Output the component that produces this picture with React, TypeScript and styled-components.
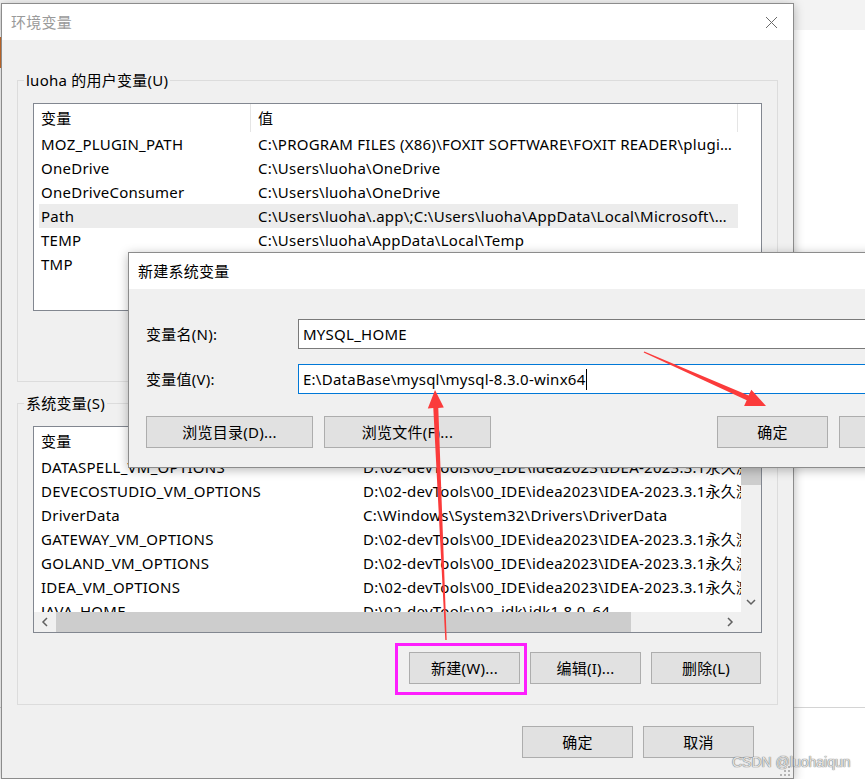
import styled, { createGlobalStyle } from 'styled-components'

const GlobalStyle = createGlobalStyle`
	* {
		box-sizing: border-box;
	}
	html,
	body {
		margin: 0;
		padding: 0;
		overflow: hidden;
		background: #fff;
	}
`

const Desktop = styled.div`
	position: relative;
	width: 865px;
	height: 779px;
	overflow: hidden;
	background:
		linear-gradient(#d0702c, #d0702c) 0 37px / 1px 31px no-repeat,
		linear-gradient(to bottom, #f3f3f3 0 30px, #ffffff 30px 707px, #d4d4d4 707px 708px, #ffffff 708px);
	font-family: 'Noto Sans', 'Noto Sans CJK SC', sans-serif;
	font-size: 15px;
	line-height: 20px;
	letter-spacing: 0.25px;
	color: #000;
`

const Window = styled.div<{ $x: number; $y: number; $w: number; $h: number }>`
	position: absolute;
	left: ${p => p.$x}px;
	top: ${p => p.$y}px;
	width: ${p => p.$w}px;
	height: ${p => p.$h}px;
	display: flex;
	flex-direction: column;
	background: #f0f0f0;
	border: 1px solid #8c8c8c;
	box-shadow: 0 2px 10px rgba(0, 0, 0, 0.28);
`

const TitleBar = styled.div<{ $inactive?: boolean }>`
	flex: none;
	height: 36px;
	display: flex;
	align-items: center;
	justify-content: space-between;
	padding-left: 9px;
	background: #fff;
	color: ${p => (p.$inactive ? '#9a9a9a' : '#000')};
`

const CloseButton = styled.div`
	width: 44px;
	height: 36px;
	display: flex;
	align-items: center;
	justify-content: center;
`

const MainBody = styled.div`
	flex: 1;
	display: flex;
	flex-direction: column;
	padding: 30px 15px 20px 15px;
`

const GroupBox = styled.fieldset<{ $gapTop?: number }>`
	margin: ${p => p.$gapTop || 0}px 0 0 0;
	padding: 13px 15px 20px 15px;
	border: 1px solid #dcdcdc;
	min-width: 0;
	display: flex;
	flex-direction: column;
`

const Legend = styled.legend`
	padding: 0 2px;
	margin-left: -9px;
	line-height: 20px;
`

const ListView = styled.div<{ $h: number }>`
	flex: none;
	height: ${p => p.$h}px;
	border: 1px solid #828790;
	background: #fff;
	overflow: hidden;
`

const HeaderRow = styled.div`
	display: flex;
	height: 28px;
`

const HeaderCell = styled.div<{ $w: number }>`
	flex: none;
	width: ${p => p.$w}px;
	padding-left: 7px;
	display: flex;
	align-items: center;
	border-right: 1px solid #e5e5e5;
`

const Row = styled.div<{ $selected?: boolean }>`
	display: flex;
	align-items: center;
	height: 24px;
	width: fit-content;
	background: ${p => (p.$selected ? 'linear-gradient(to right, transparent 5px, #ececec 5px)' : 'transparent')};
`

const Cell = styled.div<{ $w: number }>`
	flex: none;
	width: ${p => p.$w}px;
	padding: 0 4px 0 7px;
	white-space: nowrap;
	overflow: hidden;
	text-overflow: ellipsis;
`

const ScrollFrame = styled.div`
	height: 100%;
	display: grid;
	grid-template-columns: 1fr 20px;
	grid-template-rows: 1fr 20px;
`

const Viewport = styled.div`
	overflow: hidden;
	min-width: 0;
`

const VScroll = styled.div`
	display: flex;
	flex-direction: column;
	background: #f0f0f0;
`

const HScroll = styled.div`
	display: flex;
	background: #f0f0f0;
`

const ArrowButton = styled.div<{ $long?: boolean }>`
	flex: none;
	width: ${p => (p.$long ? 22 : 20)}px;
	height: 20px;
	display: flex;
	align-items: center;
	justify-content: center;
`

const Track = styled.div<{ $vertical?: boolean }>`
	flex: 1;
	display: flex;
	flex-direction: ${p => (p.$vertical ? 'column' : 'row')};
`

const Thumb = styled.div<{ $size: number; $vertical?: boolean }>`
	flex: none;
	${p => (p.$vertical ? `height: ${p.$size}px;` : `width: ${p.$size}px;`)}
	background: #cdcdcd;
`

const Corner = styled.div`
	background: #f0f0f0;
`

const ButtonRow = styled.div<{ $top: number; $right?: number }>`
	display: flex;
	justify-content: flex-end;
	gap: 10px;
	margin-top: ${p => p.$top}px;
	padding-right: ${p => p.$right || 0}px;
`

const Button = styled.button<{ $w?: number }>`
	flex: none;
	width: ${p => p.$w || 111}px;
	height: 32px;
	padding: 0;
	background: #e1e1e1;
	border: 1px solid #adadad;
	border-radius: 0;
	font: inherit;
	letter-spacing: inherit;
	color: #000;
`

const DialogBody = styled.div`
	flex: 1;
	display: flex;
	flex-direction: column;
	padding: 30px 17px 19px 17px;
`

const FieldGrid = styled.div`
	display: grid;
	grid-template-columns: 152px 1fr;
	row-gap: 15px;
	align-items: center;
`

const FieldLabel = styled.label``

const TextBox = styled.div<{ $focused?: boolean }>`
	height: 30px;
	display: flex;
	align-items: center;
	padding-left: 4px;
	background: #fff;
	border: 1px solid ${p => (p.$focused ? '#0078d7' : '#7a7a7a')};
	white-space: nowrap;
`

const Caret = styled.span`
	display: inline-block;
	width: 1px;
	height: 21px;
	margin-left: 1px;
	background: #000;
`

const DialogButtons = styled.div`
	display: flex;
	gap: 11px;
	margin-top: 22px;
`

const Spacer = styled.div`
	flex: 1;
`

const Grip = styled.svg`
	position: absolute;
	right: 2px;
	bottom: 1px;
`

const Annotations = styled.svg`
	position: absolute;
	left: 0;
	top: 0;
	pointer-events: none;
`

const Watermark = styled.div`
	position: absolute;
	left: 732px;
	top: 752px;
	font-family: 'Liberation Sans', Arial, sans-serif;
	font-size: 14px;
	line-height: 20px;
	letter-spacing: 0;
	color: #e2e2e2;
	text-shadow: 0 0 1px #6f6f6f, 0 0 1px #6f6f6f;
	white-space: nowrap;
`

const userVars = [
	['MOZ_PLUGIN_PATH', 'C:\\PROGRAM FILES (X86)\\FOXIT SOFTWARE\\FOXIT READER\\plugins\\;C:\\PROGRAM FILES'],
	['OneDrive', 'C:\\Users\\luoha\\OneDrive'],
	['OneDriveConsumer', 'C:\\Users\\luoha\\OneDrive'],
	['Path', 'C:\\Users\\luoha\\.app\\;C:\\Users\\luoha\\AppData\\Local\\Microsoft\\WindowsApps;'],
	['TEMP', 'C:\\Users\\luoha\\AppData\\Local\\Temp'],
	['TMP', 'C:\\Users\\luoha\\AppData\\Local\\Temp'],
]

const idea = 'D:\\02-devTools\\00_IDE\\idea2023\\IDEA-2023.3.1永久激活\\vmoptions'

const systemVars = [
	['DATASPELL_VM_OPTIONS', idea],
	['DEVECOSTUDIO_VM_OPTIONS', idea],
	['DriverData', 'C:\\Windows\\System32\\Drivers\\DriverData'],
	['GATEWAY_VM_OPTIONS', idea],
	['GOLAND_VM_OPTIONS', idea],
	['IDEA_VM_OPTIONS', idea],
	['JAVA_HOME', 'D:\\02-devTools\\02_jdk\\jdk1.8.0_64'],
]

const Chevron = ({ dir }: { dir: 'up' | 'down' | 'left' | 'right' }) => {
	const pts = {
		left: '6,1 2,5 6,9',
		right: '2,1 6,5 2,9',
		up: '1,6 5,2 9,6',
		down: '1,2 5,6 9,2',
	}[dir]
	const horizontal = dir === 'left' || dir === 'right'
	return (
		<svg width={horizontal ? 8 : 10} height={horizontal ? 10 : 8}>
			<polyline points={pts} fill='none' stroke='#606060' strokeWidth='1.5' />
		</svg>
	)
}

const CloseIcon = () => (
	<svg width='13' height='13' viewBox='0 0 13 13'>
		<path d='M1 1 L12 12 M12 1 L1 12' stroke='#6a6a6a' strokeWidth='1' />
	</svg>
)

const App = () => {
	return (
		<>
			<GlobalStyle />
			<Desktop>
				<Window $x={1} $y={3} $w={793} $h={776}>
					<TitleBar $inactive>
						<span>环境变量</span>
						<CloseButton>
							<CloseIcon />
						</CloseButton>
					</TitleBar>
					<MainBody>
						<GroupBox>
							<Legend>luoha 的用户变量(U)</Legend>
							<ListView $h={208}>
								<HeaderRow>
									<HeaderCell $w={217}>变量</HeaderCell>
									<HeaderCell $w={487}>值</HeaderCell>
								</HeaderRow>
								{userVars.map(([name, value]) => (
									<Row key={name} $selected={name === 'Path'}>
										<Cell $w={217}>{name}</Cell>
										<Cell $w={487}>{value}</Cell>
									</Row>
								))}
							</ListView>
							<ButtonRow $top={18}>
								<Button>新建(N)...</Button>
								<Button>编辑(E)...</Button>
								<Button>删除(D)</Button>
							</ButtonRow>
						</GroupBox>

						<GroupBox $gapTop={11}>
							<Legend>系统变量(S)</Legend>
							<ListView $h={207}>
								<ScrollFrame>
									<Viewport>
										<HeaderRow>
											<HeaderCell $w={322}>变量</HeaderCell>
											<HeaderCell $w={600}>值</HeaderCell>
										</HeaderRow>
										{systemVars.map(([name, value]) => (
											<Row key={name}>
												<Cell $w={322}>{name}</Cell>
												<Cell $w={600}>{value}</Cell>
											</Row>
										))}
									</Viewport>
									<VScroll>
										<ArrowButton>
											<Chevron dir='up' />
										</ArrowButton>
										<Track $vertical>
											<Thumb $vertical $size={38} />
										</Track>
										<ArrowButton>
											<Chevron dir='down' />
										</ArrowButton>
									</VScroll>
									<HScroll>
										<ArrowButton $long>
											<Chevron dir='left' />
										</ArrowButton>
										<Track>
											<Thumb $size={575} />
										</Track>
										<ArrowButton $long>
											<Chevron dir='right' />
										</ArrowButton>
									</HScroll>
									<Corner />
								</ScrollFrame>
							</ListView>
							<ButtonRow $top={19} $right={1}>
								<Button>新建(W)...</Button>
								<Button>编辑(I)...</Button>
								<Button $w={110}>删除(L)</Button>
							</ButtonRow>
						</GroupBox>

						<ButtonRow $top={21} $right={24}>
							<Button>确定</Button>
							<Button>取消</Button>
						</ButtonRow>
					</MainBody>
					<Grip width='12' height='12' viewBox='0 0 12 12'>
						{[
							[9, 1],
							[9, 5],
							[5, 5],
							[9, 9],
							[5, 9],
							[1, 9],
						].map(([x, y]) => (
							<rect key={`${x}-${y}`} x={x} y={y} width='2' height='2' fill='#b4b4b4' />
						))}
					</Grip>
				</Window>

				<Window $x={128} $y={252} $w={840} $h={216}>
					<TitleBar>
						<span>新建系统变量</span>
					</TitleBar>
					<DialogBody>
						<FieldGrid>
							<FieldLabel>变量名(N):</FieldLabel>
							<TextBox>MYSQL_HOME</TextBox>
							<FieldLabel>变量值(V):</FieldLabel>
							<TextBox $focused>
								E:\DataBase\mysql\mysql-8.3.0-winx64
								<Caret />
							</TextBox>
						</FieldGrid>
						<DialogButtons>
							<Button $w={167}>浏览目录(D)...</Button>
							<Button $w={167}>浏览文件(F)...</Button>
							<Spacer />
							<Button>确定</Button>
							<Button>取消</Button>
						</DialogButtons>
					</DialogBody>
				</Window>

				<Annotations width='865' height='779' viewBox='0 0 865 779'>
					<polygon
						points='446.7,640 438.3,407.9 443.8,407.6 435,390 427.8,408.4 433.3,408.1 445.3,640'
						fill='#fb3b3b'
					/>
					<polygon
						points='643.7,352.6 746.7,400.2 744.1,406.1 766,406 751.3,389.7 748.7,395.6 644.3,351.4'
						fill='#fb3b3b'
					/>
					<rect x='396.5' y='644.5' width='129' height='49' fill='none' stroke='#fd1efd' strokeWidth='3' />
				</Annotations>

				<Watermark>CSDN @luohaiqun</Watermark>
			</Desktop>
		</>
	)
}

export default App
